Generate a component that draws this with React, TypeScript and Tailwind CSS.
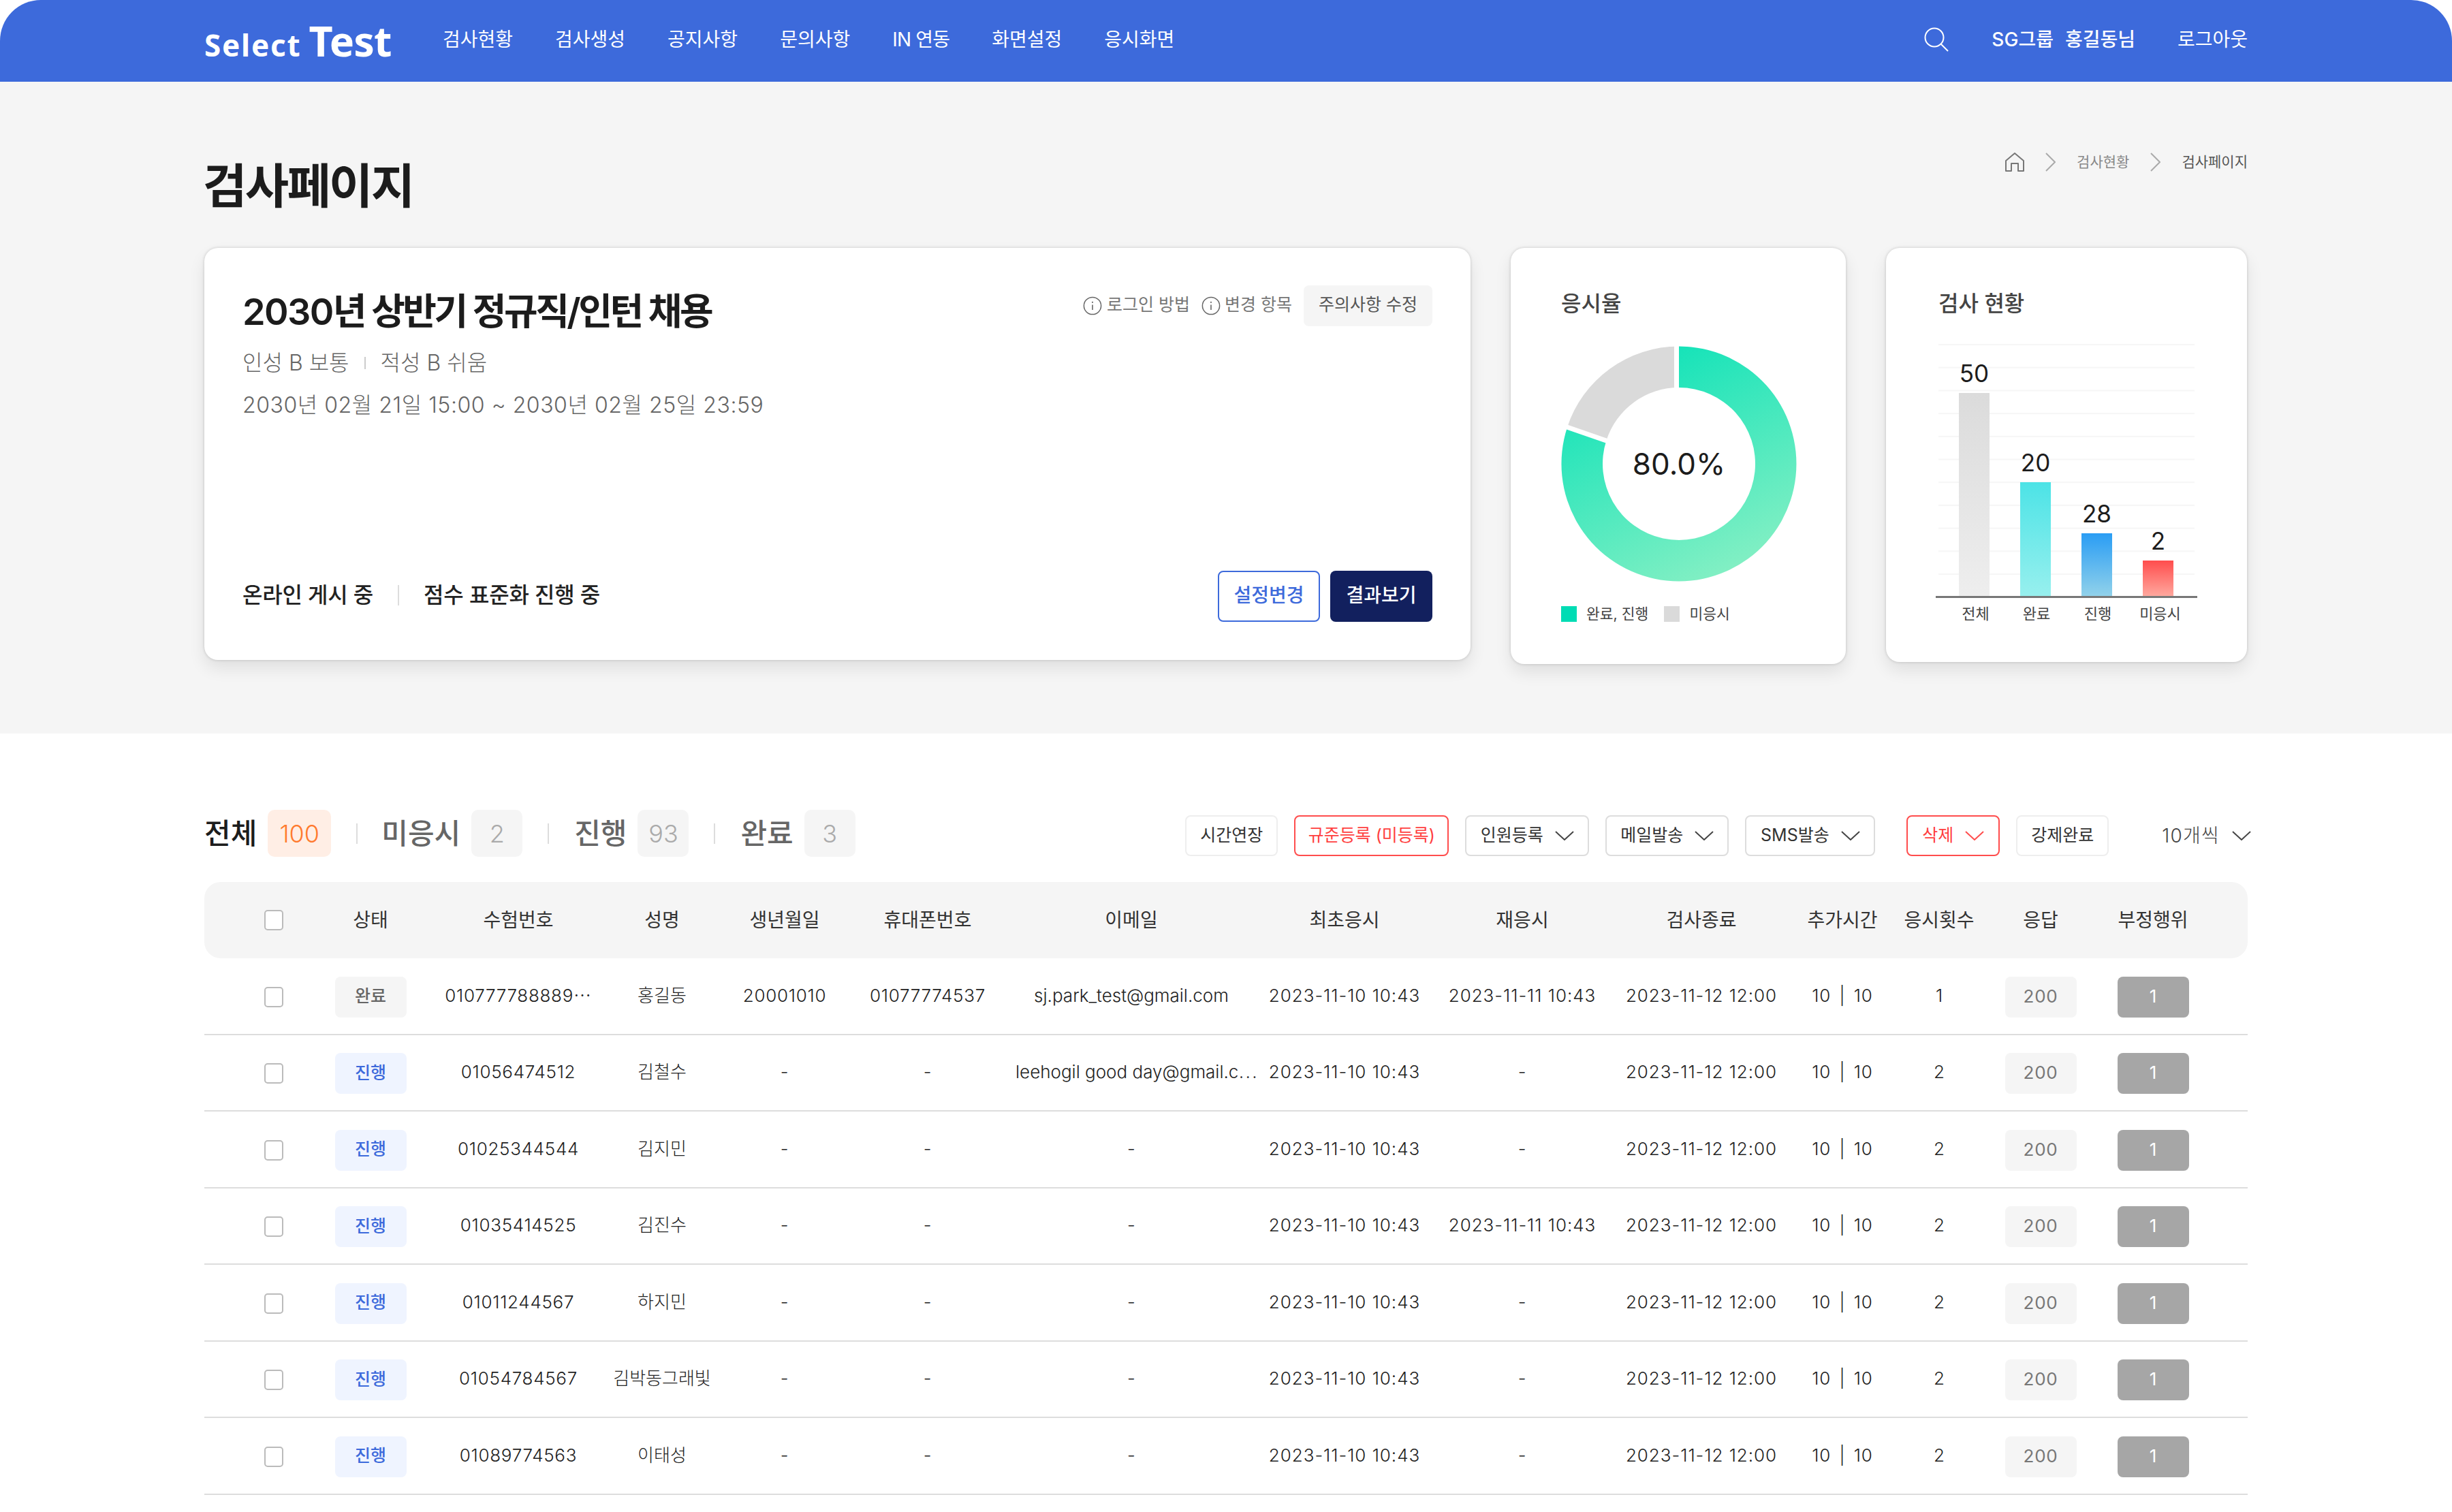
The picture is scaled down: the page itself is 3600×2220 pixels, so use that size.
import React from "react";

const nav = ["검사현황", "검사생성", "공지사항", "문의사항", "IN 연동", "화면설정", "응시화면"];

const cols = [
  "w-[60px] ml-[72px]",
  "w-[106px] ml-[59px]",
  "w-[224px] ml-[52px]",
  "w-[150px] ml-[24px]",
  "w-[160px] ml-[25px]",
  "w-[190px] ml-[35px]",
  "w-[340px] ml-[34px]",
  "w-[240px] ml-[23px]",
  "w-[240px] ml-[21px]",
  "w-[240px] ml-[23px]",
  "w-[110px] ml-[32px]",
  "w-[120px] ml-[27px]",
  "w-[110px] ml-[34px]",
  "w-[110px] ml-[55px]",
];

const head = ["상태", "수험번호", "성명", "생년월일", "휴대폰번호", "이메일", "최초응시", "재응시", "검사종료", "추가시간", "응시횟수", "응답", "부정행위"];

const F = "2023-11-10 10:43";
const R = "2023-11-11 10:43";
const E = "2023-11-12 12:00";
const rows = [
  ["완료", "010777788889⋯", "홍길동", "20001010", "01077774537", "sj.park_test@gmail.com", F, R, E, "10 | 10", "1"],
  ["진행", "01056474512", "김철수", "-", "-", "leehogil good day@gmail.c⋯", F, "-", E, "10 | 10", "2"],
  ["진행", "01025344544", "김지민", "-", "-", "-", F, "-", E, "10 | 10", "2"],
  ["진행", "01035414525", "김진수", "-", "-", "-", F, R, E, "10 | 10", "2"],
  ["진행", "01011244567", "하지민", "-", "-", "-", F, "-", E, "10 | 10", "2"],
  ["진행", "01054784567", "김박동그래빛", "-", "-", "-", F, "-", E, "10 | 10", "2"],
  ["진행", "01089774563", "이태성", "-", "-", "-", F, "-", E, "10 | 10", "2"],
];

function Info() {
  return (
    <svg width="28" height="28" viewBox="0 0 28 28" fill="none" className="shrink-0 block">
      <circle cx="14" cy="14" r="12.6" stroke="#666" strokeWidth="1.5" />
      <circle cx="14" cy="8.8" r="1.1" fill="#666" />
      <path d="M14 12.5V20" stroke="#666" strokeWidth="1.6" />
    </svg>
  );
}

function Chev({ color = "#444" }: { color?: string }) {
  return (
    <svg width="28" height="14" viewBox="0 0 28 14" fill="none" className="shrink-0 block">
      <path d="M1 1L14 13L27 1" stroke={color} strokeWidth="2" />
    </svg>
  );
}

function Crumb() {
  return (
    <svg width="15" height="28" viewBox="0 0 15 28" fill="none" className="shrink-0 block">
      <path d="M1 1L14 14L1 27" stroke="#aaa" strokeWidth="2" />
    </svg>
  );
}

function Count({ n, tone }: { n: string; tone: "o" | "g" }) {
  return tone === "o" ? (
    <span className="h-[69px] w-[93px] rounded-[10px] bg-[#ffeee5] text-[#ff7a2e] text-[36px] font-light flex items-center justify-center">{n}</span>
  ) : (
    <span className="h-[69px] w-[75px] rounded-[10px] bg-[#f5f5f5] text-[#aaaaaa] text-[36px] font-light flex items-center justify-center">{n}</span>
  );
}

function Divider() {
  return <span className="block w-[2px] h-[30px] bg-[#dddddd]" />;
}

function Btn({ children, w, red, light, drop }: { children: React.ReactNode; w: string; red?: boolean; light?: boolean; drop?: boolean }) {
  const tone = red ? "border-[#ff4d4d] text-[#ff4040]" : light ? "border-[#eeeeee] text-[#333]" : "border-[#dddddd] text-[#333]";
  return (
    <button className={`${w} h-[60px] rounded-[8px] border-2 bg-white text-[25px] flex items-center justify-center gap-[17px] ${tone}`}>
      <span>{children}</span>
      {drop && <Chev color={red ? "#ff4d4d" : "#444"} />}
    </button>
  );
}

function cellTone(i: number) {
  if (i === 1 || i === 4) return "";
  if (i === 5 || i === 6 || i === 7) return "tracking-[0.95px]";
  if (i === 8) return "tracking-[0.9px] [word-spacing:4px]";
  return "tracking-[0.7px]";
}

function Row({ r }: { r: string[] }) {
  const done = r[0] === "완료";
  return (
    <div className="h-[112.5px] border-b-2 border-[#dddddd] flex items-center text-[26px] font-light text-[#222]">
      <div className={`${cols[0]} flex justify-center mt-[3px]`}>
        <span className="w-[28px] h-[30px] rounded-[5px] border-2 border-[#bbbbbb] bg-white" />
      </div>
      <div className={`${cols[1]} flex justify-center mt-[3px]`}>
        <span className={done ? "w-[105px] h-[60px] pb-[2px] rounded-[8px] bg-[#f5f5f5] text-[#666] text-[25px] font-medium flex items-center justify-center" : "w-[105px] h-[60px] pb-[2px] rounded-[8px] bg-[#eff4ff] text-[#3d6adb] text-[25px] font-medium flex items-center justify-center"}>{r[0]}</span>
      </div>
      {r.slice(1, 10).map((t, i) => (
        <div key={i} className={`${cols[i + 2]} mt-[-2px] text-center whitespace-nowrap ${cellTone(i)}`}>
          {t}
        </div>
      ))}
      <div className={`${cols[11]} mt-[-2px] text-center`}>{r[10]}</div>
      <div className={`${cols[12]} flex justify-center mt-[3px]`}>
        <span className="w-[105px] h-[60px] pb-[3px] rounded-[8px] bg-[#f5f5f5] text-[#777] font-normal tracking-[0.7px] flex items-center justify-center">200</span>
      </div>
      <div className={`${cols[13]} flex justify-center mt-[3px]`}>
        <span className="w-[105px] h-[60px] pb-[3px] rounded-[8px] bg-[#a6a6a6] text-white font-normal flex items-center justify-center">1</span>
      </div>
    </div>
  );
}

const card = "bg-white rounded-[20px] shadow-[0_0_4px_rgba(0,0,0,0.18),0_12px_24px_rgba(0,0,0,0.09)]";

export default function App() {
  return (
    <div className="w-[3600px] min-h-[2220px] bg-white font-[Inter,'Noto_Sans_CJK_KR',sans-serif] overflow-hidden">
      <header className="h-[120px] bg-[#3d6adb] rounded-t-[60px] px-[300px] flex items-center text-white text-[28px] pb-[4px]">
        <div className="w-[350px] flex items-baseline font-['Noto_Sans',sans-serif] mt-[4px]">
          <span className="text-[44px] font-bold tracking-[1.8px]">Select</span>
          <span className="text-[61px] font-bold ml-[11px] tracking-[-0.8px]">Test</span>
        </div>
        <nav className="flex gap-[62px]">
          {nav.map((n, i) => (
            <span key={n} className={i === 4 ? "tracking-[-0.8px]" : ""}>{n}</span>
          ))}
        </nav>
        <div className="ml-auto flex items-center">
          <svg width="36" height="36" viewBox="0 0 36 36" fill="none" className="mr-[63px]">
            <circle cx="15" cy="15" r="13.5" stroke="#fff" strokeWidth="2" />
            <path d="M24.5 24.5L35 35" stroke="#fff" strokeWidth="2" />
          </svg>
          <span className="font-medium flex gap-[17px]"><span>SG그룹</span><span>홍길동님</span></span>
          <span className="ml-[62px]">로그아웃</span>
        </div>
      </header>

      <section className="h-[957px] bg-[#f5f5f5] px-[300px] pt-[104px]">
        <div className="h-[140px] flex justify-between items-start">
          <h1 className="text-[70px] leading-[80px] font-bold text-[#1c1c1c] tracking-[-2.7px] mt-[10px] ml-[-2px]">검사페이지</h1>
          <div className="flex items-center text-[21px] text-[#888] h-[28px] gap-[31px]">
            <svg width="28" height="28" viewBox="0 0 28 28" fill="none" className="block">
              <path d="M1 12L14 1L27 12V27H19V16H9V27H1Z" stroke="#777" strokeWidth="2" strokeLinejoin="round" />
            </svg>
            <Crumb />
            <span>검사현황</span>
            <Crumb />
            <span className="text-[#555]">검사페이지</span>
          </div>
        </div>

        <div className="flex items-start">
          <div className={`${card} w-[1859px] h-[605px] pt-[55px] pb-[56px] px-[56px] flex flex-col justify-between`}>
            <div className="flex justify-between items-start">
              <div>
                <h2 className="text-[54px] leading-[62px] font-semibold text-[#1c1c1c] tracking-[-3.5px] mt-[8px]"><span className="tracking-[-1.6px]">2030</span>년 상반기 정규직/인턴 채용</h2>
                <p className="text-[32px] leading-[44px] font-light text-[#666] mt-[22px] flex items-center">
                  <span>인성 B 보통</span>
                  <span className="w-[2px] h-[18px] bg-[#cccccc] mx-[22px]" />
                  <span>적성 B 쉬움</span>
                </p>
                <p className="text-[32px] leading-[44px] font-light text-[#666] mt-[18px] tracking-[0.55px]">2030년 02월 21일 15:00 ~ 2030년 02월 25일 23:59</p>
              </div>
              <div className="flex items-center text-[25px] text-[#777]">
                <Info />
                <span className="ml-[7px] pb-[2px]">로그인 방법</span>
                <span className="ml-[17px]"><Info /></span>
                <span className="ml-[6px] pb-[2px]">변경 항목</span>
                <button className="ml-[17px] w-[189px] h-[60px] pb-[2px] rounded-[8px] bg-[#f5f5f5] text-[#555]">주의사항 수정</button>
              </div>
            </div>
            <div className="flex justify-between items-center">
              <div className="flex items-center text-[32px] font-medium text-[#222] tracking-[-0.2px] mt-[-3px]">
                <span>온라인 게시 중</span>
                <span className="w-[2px] h-[30px] bg-[#dddddd] mx-[36px]" />
                <span>점수 표준화 진행 중</span>
              </div>
              <div className="flex gap-[15px] text-[28px] font-medium">
                <button className="w-[150px] h-[75px] pb-[3px] rounded-[8px] border-2 border-[#3d6adb] text-[#3d6adb] bg-white">설정변경</button>
                <button className="w-[150px] h-[75px] pb-[3px] rounded-[8px] bg-[#12205e] text-white">결과보기</button>
              </div>
            </div>
          </div>

          <div className={`${card} ml-[59px] w-[492px] h-[611px] pt-[60px] px-[74px]`}>
            <h3 className="text-[32px] leading-[44px] font-medium text-[#444]">응시율</h3>
            <div className="relative w-[346px] h-[346px] mt-[40px]">
              <svg width="346" height="346" viewBox="0 0 346 346" className="block">
                <defs>
                  <linearGradient id="dg" gradientUnits="userSpaceOnUse" x1="110" y1="0" x2="270" y2="340">
                    <stop offset="0" stopColor="#0de2b8" />
                    <stop offset="1" stopColor="#88f0c4" />
                  </linearGradient>
                </defs>
                <path d="M173 .5A172.5 172.5 0 1 1 8.9 119.7L66.5 138.4A112 112 0 1 0 173 61Z" fill="url(#dg)" />
                <path d="M8.9 119.7A172.5 172.5 0 0 1 173 .5L173 61A112 112 0 0 0 66.5 138.4Z" fill="#dadada" />
                <path d="M169.5 0V62" stroke="#fff" strokeWidth="7" />
                <path d="M0 116L72 141" stroke="#fff" strokeWidth="7" />
              </svg>
              <div className="absolute inset-0 flex items-center justify-center text-[44px] text-[#1c1c1c]">80.0%</div>
            </div>
            <div className="flex items-center text-[21.5px] text-[#444] mt-[31px]">
              <span className="w-[23px] h-[23px] bg-[#00dcb4]" />
              <span className="ml-[14px]">완료, 진행</span>
              <span className="w-[23px] h-[23px] bg-[#dadada] ml-[23px]" />
              <span className="ml-[14px]">미응시</span>
            </div>
          </div>

          <div className={`${card} ml-[59px] w-[530px] h-[608px] pt-[60px] pl-[73px]`}>
            <h3 className="text-[32px] leading-[44px] font-medium text-[#444] ml-[4px]">검사 현황</h3>
            <svg width="384" height="430" viewBox="0 0 384 430" className="block mt-[37px]">
              <defs>
                <linearGradient id="b1" x1="0" y1="0" x2="0" y2="1"><stop offset="0" stopColor="#dbdbdb" /><stop offset="1" stopColor="#eeeeee" /></linearGradient>
                <linearGradient id="b2" x1="0" y1="0" x2="0" y2="1"><stop offset="0" stopColor="#4ce3e6" /><stop offset="1" stopColor="#98f0ee" /></linearGradient>
                <linearGradient id="b3" x1="0" y1="0" x2="0" y2="1"><stop offset="0" stopColor="#2a9df4" /><stop offset="1" stopColor="#92d2ea" /></linearGradient>
                <linearGradient id="b4" x1="0" y1="0" x2="0" y2="1"><stop offset="0" stopColor="#ff4d4d" /><stop offset="1" stopColor="#ffa99f" /></linearGradient>
              </defs>
              {[0, 1, 2, 3, 4, 5, 6, 7, 8, 9, 10].map((i) => (
                <rect key={i} x="4" y={i * 33.7} width="376" height="2" fill="#f6f6f6" />
              ))}
              <rect x="34" y="72" width="45" height="299" fill="url(#b1)" />
              <rect x="124" y="203" width="45" height="168" fill="url(#b2)" />
              <rect x="214" y="278" width="45" height="93" fill="url(#b3)" />
              <rect x="304" y="318" width="45" height="53" fill="url(#b4)" />
              <rect x="0" y="370" width="384" height="3" fill="#777" />
              <g fontSize="35" fill="#1c1c1c" textAnchor="middle">
                <text x="56.5" y="56">50</text>
                <text x="146.5" y="187">20</text>
                <text x="236.5" y="262">28</text>
                <text x="326.5" y="302">2</text>
              </g>
              <g fontSize="22" fill="#444" textAnchor="middle">
                <text x="58.5" y="404">전체</text>
                <text x="148" y="404">완료</text>
                <text x="238" y="404">진행</text>
                <text x="329.5" y="404">미응시</text>
              </g>
            </svg>
          </div>
        </div>
      </section>

      <section className="px-[300px] pt-[112px]">
        <div className="h-[69px] flex items-center">
          <div className="flex items-center text-[42px] font-medium">
            <span className="text-[#1c1c1c]">전체</span>
            <span className="ml-[16px]"><Count n="100" tone="o" /></span>
            <span className="ml-[37px]"><Divider /></span>
            <span className="ml-[35px] text-[#666]">미응시</span>
            <span className="ml-[16px]"><Count n="2" tone="g" /></span>
            <span className="ml-[37px]"><Divider /></span>
            <span className="ml-[37px] text-[#666]">진행</span>
            <span className="ml-[16px]"><Count n="93" tone="g" /></span>
            <span className="ml-[37px]"><Divider /></span>
            <span className="ml-[37px] text-[#666]">완료</span>
            <span className="ml-[16px]"><Count n="3" tone="g" /></span>
          </div>
          <div className="ml-auto flex items-center mr-[-5px] mt-[7px]">
            <Btn w="w-[136px]" light>시간연장</Btn>
            <span className="ml-[24px]"><Btn w="w-[227px]" red>규준등록 (미등록)</Btn></span>
            <span className="ml-[24px]"><Btn w="w-[182px]" drop>인원등록</Btn></span>
            <span className="ml-[24px]"><Btn w="w-[181px]" drop>메일발송</Btn></span>
            <span className="ml-[24px]"><Btn w="w-[191px]" drop>SMS발송</Btn></span>
            <span className="ml-[46px]"><Btn w="w-[137px]" red drop>삭제</Btn></span>
            <span className="ml-[24px]"><Btn w="w-[136px]" light>강제완료</Btn></span>
            <span className="ml-[78px] flex items-center gap-[18px] text-[28px] font-light tracking-[1.2px] text-[#444]">10개씩 <Chev /></span>
          </div>
        </div>

        <div className="mt-[37px] h-[112px] rounded-[24px] bg-[#f5f5f5] flex items-center text-[28px] text-[#333]">
          <div className={`${cols[0]} flex justify-center`}>
            <span className="w-[28px] h-[30px] rounded-[5px] border-2 border-[#bbbbbb] bg-white" />
          </div>
          {head.map((h, i) => (
            <div key={h} className={`${cols[i + 1]} text-center`}>{h}</div>
          ))}
        </div>
        {rows.map((r, i) => (
          <Row key={i} r={r} />
        ))}
      </section>
    </div>
  );
}
